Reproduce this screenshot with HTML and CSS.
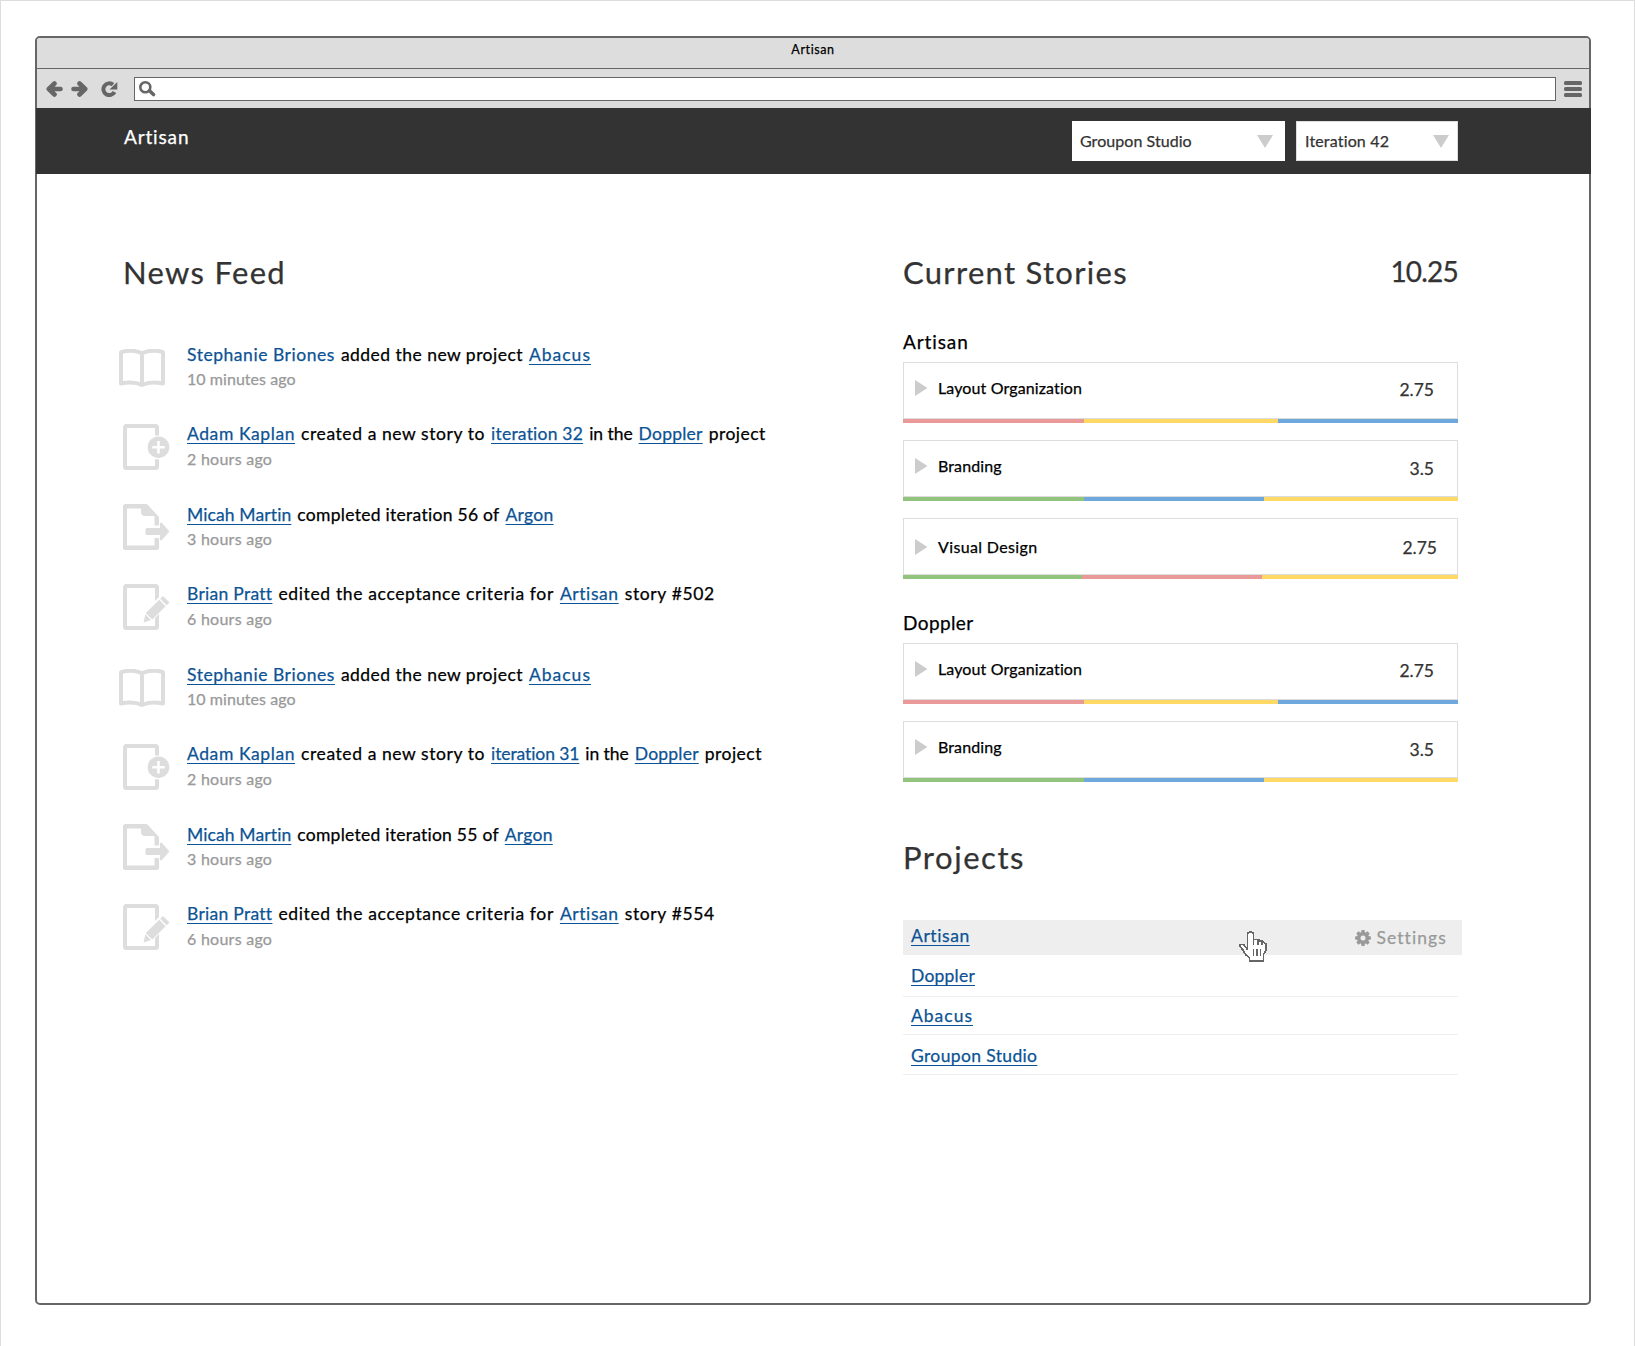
FILE: index.html
```html
<!DOCTYPE html>
<html lang="en">
<head>
<meta charset="utf-8">
<title>Artisan</title>
<link rel="stylesheet" href="styles.css">
</head>
<body>
<svg class="sprite" width="0" height="0" aria-hidden="true">
  <symbol id="book" viewBox="0 0 46 39"><path d="M2 3.2C9 1 17 1.400 23 4.300C29 1.400 37 1 44 3.200V34.500C37 33 29 33 23 36C17 33 9 33 2 34.500ZM23 4.300V36" fill="none" stroke="#ddd" stroke-width="4" stroke-linejoin="round"/></symbol>
  <symbol id="doc-add" viewBox="0 0 47 46"><path d="M36 11.400V3.500Q36 0 32.500 0H3.500Q0 0 0 3.500V42.500Q0 46 3.500 46H32.500Q36 46 36 42.500V35.300H32V42H4V4H32V11.400Z" fill="#ddd"/><circle cx="35.500" cy="23.200" r="10.800" fill="#ddd"/><path d="M35.500 17V29.400M29.300 23.200H41.700" stroke="#fff" stroke-width="2.600"/></symbol>
  <symbol id="doc-move" viewBox="0 0 47 46"><path d="M36 21.500V13L24 0H2.500Q0 0 0 2.500V43.500Q0 46 2.500 46H33.500Q36 46 36 43.500V34H31.500V41.500H4V4.500H18V8Q18 12 22 12H31.500V21.500Z" fill="#ddd"/><path d="M24 24H37V19L38.500 18.500L46.500 27.500L38.500 36.500L37 36V31H24Q22.500 31 22.500 29.500V25.500Q22.500 24 24 24Z" fill="#ddd"/></symbol>
  <symbol id="doc-edit" viewBox="0 0 47 46"><path d="M36 13V3.500Q36 0 32.500 0H3.500Q0 0 0 3.500V42.500Q0 46 3.500 46H32.500Q36 46 36 42.500V30L32 34V42H4V4H32V17Z" fill="#ddd"/><path d="M40 12L46.500 18.500L43.700 21.300L37.200 14.800ZM36.200 15.800L42.700 22.300L29.200 35.500L22.800 29ZM22.300 30.200L28 36L20.500 38.500Z" fill="#ddd"/></symbol>
  <symbol id="arrow" viewBox="0 0 17 16"><path d="M14.500 8H5M8.500 2.500L2.800 8L8.500 13.500" fill="none" stroke="#666" stroke-width="4.600" stroke-linecap="round" stroke-linejoin="round"/></symbol>
  <symbol id="play" viewBox="0 0 13 16"><path d="M0 0L12.500 8L0 16Z" fill="#ccc"/></symbol>
  <symbol id="down" viewBox="0 0 16 13"><path d="M0 0H16L8 13Z" fill="#ccc"/></symbol>
</svg>

<div class="window">
  <div class="titlebar">Artisan</div>
  <div class="toolbar">
    <svg class="back" width="17" height="16"><use href="#arrow"/></svg>
    <svg class="forward" width="17" height="16"><use href="#arrow"/></svg>
    <svg class="reload" width="17" height="16" viewBox="0 0 17 16"><path d="M12 3.600A5.900 5.900 0 1 0 13.500 11" fill="none" stroke="#666" stroke-width="4"/><path d="M16.300 1V8.500H8.500Z" fill="#666"/></svg>
    <div class="address"><svg width="17" height="16" viewBox="0 0 17 16"><circle cx="6.300" cy="6.300" r="5" fill="none" stroke="#666" stroke-width="2.600"/><path d="M10.500 9.800L14.500 13.500" stroke="#666" stroke-width="3.600" stroke-linecap="round"/></svg></div>
    <div class="menu"><i></i><i></i><i></i></div>
  </div>
  <header class="nav">
    <div class="brand">Artisan</div>
    <div class="select select-studio"><span>Groupon Studio</span><svg width="16" height="13"><use href="#down"/></svg></div>
    <div class="select select-iteration"><span>Iteration 42</span><svg width="16" height="13"><use href="#down"/></svg></div>
  </header>

  <main class="content">
    <section class="feed">
      <h1>News Feed</h1>
      <article><svg class="icon book" width="46" height="39"><use href="#book"/></svg><div class="entry"><p><a class="plain tr-54">Stephanie Briones</a><span class="tr-47">added the new project</span><a class="tr-100">Abacus</a></p><time class="minutes">10 minutes ago</time></div></article>
      <article><svg class="icon" width="47" height="46"><use href="#doc-add"/></svg><div class="entry"><p><a class="tr-58">Adam Kaplan</a><span class="tr-58">created a new story to</span><a class="tr-22">iteration 32</a><span class="tr-0">in the</span><a class="tr-22">Doppler</a><span class="tr-47">project</span></p><time>2 hours ago</time></div></article>
      <article><svg class="icon" width="47" height="46"><use href="#doc-move"/></svg><div class="entry"><p><a class="tr-10">Micah Martin</a><span class="tr-28">completed iteration 56 of</span><a class="tr-28">Argon</a></p><time>3 hours ago</time></div></article>
      <article><svg class="icon" width="47" height="46"><use href="#doc-edit"/></svg><div class="entry"><p><a class="tr-28">Brian Pratt</a><span class="tr-64">edited the acceptance criteria for</span><a class="tr-58">Artisan</a><span class="tr-64">story #502</span></p><time>6 hours ago</time></div></article>
      <article><svg class="icon book" width="46" height="39"><use href="#book"/></svg><div class="entry"><p><a class="tr-54">Stephanie Briones</a><span class="tr-47">added the new project</span><a class="tr-100">Abacus</a></p><time class="minutes">10 minutes ago</time></div></article>
      <article><svg class="icon" width="47" height="46"><use href="#doc-add"/></svg><div class="entry"><p><a class="tr-58">Adam Kaplan</a><span class="tr-58">created a new story to</span><a class="tr-n10">iteration 31</a><span class="tr-0">in the</span><a class="tr-22">Doppler</a><span class="tr-47">project</span></p><time>2 hours ago</time></div></article>
      <article><svg class="icon" width="47" height="46"><use href="#doc-move"/></svg><div class="entry"><p><a class="tr-10">Micah Martin</a><span class="tr-25">completed iteration 55 of</span><a class="tr-28">Argon</a></p><time>3 hours ago</time></div></article>
      <article><svg class="icon" width="47" height="46"><use href="#doc-edit"/></svg><div class="entry"><p><a class="tr-28">Brian Pratt</a><span class="tr-64">edited the acceptance criteria for</span><a class="tr-58">Artisan</a><span class="tr-64">story #554</span></p><time>6 hours ago</time></div></article>
    </section>

    <section class="side">
      <div class="side-head"><h1>Current Stories</h1><div class="total">10.25</div></div>
      <h2>Artisan</h2>
      <div class="story"><div class="card"><svg width="13" height="16"><use href="#play"/></svg><span class="name tr-10">Layout Organization</span><span class="points">2.75</span></div><div class="strip"><i class="red" style="width:181px"></i><i class="yellow" style="width:194px"></i><i class="blue" style="width:180px"></i></div></div>
      <div class="story"><div class="card"><svg width="13" height="16"><use href="#play"/></svg><span class="name tr-10">Branding</span><span class="points low">3.5</span></div><div class="strip"><i class="green" style="width:181px"></i><i class="blue" style="width:180px"></i><i class="yellow" style="width:194px"></i></div></div>
      <div class="story"><div class="card lowered"><svg width="13" height="16"><use href="#play"/></svg><span class="name tr-36">Visual Design</span><span class="points high">2.75</span></div><div class="strip"><i class="green" style="width:179px"></i><i class="red" style="width:180px"></i><i class="yellow" style="width:196px"></i></div></div>
      <h2 class="second">Doppler</h2>
      <div class="story"><div class="card"><svg width="13" height="16"><use href="#play"/></svg><span class="name tr-10">Layout Organization</span><span class="points">2.75</span></div><div class="strip"><i class="red" style="width:181px"></i><i class="yellow" style="width:194px"></i><i class="blue" style="width:180px"></i></div></div>
      <div class="story"><div class="card"><svg width="13" height="16"><use href="#play"/></svg><span class="name tr-10">Branding</span><span class="points low">3.5</span></div><div class="strip"><i class="green" style="width:181px"></i><i class="blue" style="width:180px"></i><i class="yellow" style="width:194px"></i></div></div>
      <h1 class="projects-title">Projects</h1>
      <ul class="projects">
        <li class="active"><a class="tr-58">Artisan</a><div class="settings"><svg width="16" height="16" viewBox="-8 -8 16 16"><g fill="#999"><path id="tooth" d="M-2 -5L-1.500 -7.900H1.500L2 -5V5L1.500 7.900H-1.500L-2 5Z"/><use href="#tooth" transform="rotate(45)"/><use href="#tooth" transform="rotate(90)"/><use href="#tooth" transform="rotate(135)"/><circle r="6"/></g><circle r="2.500" fill="#eee"/></svg><span>Settings</span></div>
          <svg class="pointer" width="28" height="31" viewBox="0 0 28 31" shape-rendering="crispEdges"><path d="M8.500 18.500V2.500L10.500 .800H12.500L14.500 2.500V8.500H20.500V10H23.500L27 13V19.500L24.500 23V30H10.500V27L6.500 23.500L4 19L.800 15.500V13.500H4.500L8.500 18.500" fill="#fff" stroke="#666" stroke-width="1.600"/><path d="M14.500 8V14M19 9V14M23 10.500V14M14.500 17.500V25M18 17.500V25M21.500 17.500V25" stroke="#666" stroke-width="1.500"/></svg></li>
        <li><a class="tr-22">Doppler</a></li>
        <li class="abacus"><a class="tr-100">Abacus</a></li>
        <li class="studio"><a class="tr-36">Groupon Studio</a></li>
      </ul>
    </section>
  </main>
</div>
</body>
</html>
```
FILE: styles.css
```css
* { box-sizing: border-box; }
body { margin: 0; height: 1346px; padding: 35px 43px 0 34px; border: 1px solid #ddd; border-bottom: 0; background: #fff; color: #000; font-family: Lato, sans-serif; font-size: 17.500px; font-variant-ligatures: none; -webkit-text-stroke: .25px currentColor; }
h1, h2, p, ul { margin: 0; padding: 0; font-weight: 400; }
svg { display: block; flex: none; }
.sprite { position: absolute; }

/* letter tracking, in hundredths of a pixel */
.tr-n10 { letter-spacing: -.1px; }
.tr-0 { letter-spacing: -.04px; }
.tr-10 { letter-spacing: .12px; }
.tr-22 { letter-spacing: .22px; }
.tr-25 { letter-spacing: .25px; }
.tr-28 { letter-spacing: .28px; }
.tr-36 { letter-spacing: .36px; }
.tr-47 { letter-spacing: .47px; }
.tr-54 { letter-spacing: .54px; }
.tr-58 { letter-spacing: .58px; }
.tr-64 { letter-spacing: .64px; }
.tr-100 { letter-spacing: 1px; }

.window { width: 1556px; height: 1269px; border: 2px solid #666; border-radius: 5px; }
.titlebar { height: 31px; border-bottom: 1px solid #666; background: #ddd; border-radius: 3px 3px 0 0; font-size: 12.500px; line-height: 24px; text-align: center; letter-spacing: .6px; }
.toolbar { display: flex; height: 39px; padding: 8px 7px 0 9px; background: #ddd; }
.back, .forward, .reload { margin-top: 4px; }
.forward { margin-left: 8px; transform: scaleX(-1); }
.reload { margin-left: 13px; }
.address { width: 1422px; height: 24px; margin-left: 16px; padding: 3px 4px; border: 1px solid #666; background: #fff; }
.menu { display: grid; gap: 2px; width: 18px; height: 16px; margin: 4px 0 0 8px; }
.menu i { height: 4px; border-radius: 1.500px; background: #666; }
.nav { display: flex; height: 66px; margin: 0 -2px 0 -1px; padding: 13px 133px 0 88px; background: #333; color: #fff; }
.brand { flex: 1; font-size: 19px; line-height: 32px; letter-spacing: .85px; }
.select { display: flex; justify-content: space-between; height: 40px; padding: 0 11px 0 7px; border: 1px solid #fff; background: #fff; color: #333; font-size: 16px; line-height: 38px; letter-spacing: .05px; }
.select svg { margin-top: 13px; }
.select-studio { width: 213px; }
.select-iteration { width: 162px; margin-left: 11px; padding: 0 8px; border-color: #ddd; letter-spacing: .16px; }
.content { display: flex; padding: 78px 0 0 86px; }
h1 { color: #333; font-size: 31px; line-height: 40px; letter-spacing: 1.300px; }
.feed { width: 780px; }
.feed article { display: flex; height: 80px; }
.feed h1 + article { margin-top: 52px; }
.icon { width: 47px; }
.icon.book { width: 46px; margin: 5px 5px 0 -4px; }
.entry { padding-left: 17px; }
.entry p { display: flex; gap: 6px; line-height: 20px; margin: 1px 0 4px; white-space: nowrap; }
article:nth-of-type(even) .entry p { margin: 0 0 5px; }
a { color: #0b5394; text-decoration: underline 1px; text-underline-offset: 3px; text-decoration-skip-ink: none; }
a.plain { text-decoration: none; }
time { display: block; color: #999; font-size: 16px; line-height: 20px; letter-spacing: .26px; }
time.minutes { letter-spacing: .05px; }
.side { width: 559px; }
.side-head { display: flex; justify-content: space-between; width: 555px; }
.total { color: #333; font-size: 28px; line-height: 39px; letter-spacing: -.8px; }
h2 { margin-top: 34px; font-size: 19px; line-height: 32px; height: 36px; letter-spacing: .9px; }
h2.second { margin-top: 28px; letter-spacing: .4px; }
.story { width: 555px; margin-bottom: 17px; }
.card { display: flex; height: 57px; padding: 17px 23px 0 11px; border: 1px solid #ddd; }
.name { flex: 1; margin: -2px 0 0 10px; font-size: 16px; line-height: 20px; }
.points { color: #333; font-size: 17.500px; line-height: 20px; }
.points.low { margin-top: 1px; }
.points.high { margin-top: -1px; }
.lowered { padding: 20px 20px 0 11px; }
.strip { display: flex; height: 4px; }
.red { background: #ea9999; }
.yellow { background: #ffd966; }
.blue { background: #6fa8dc; }
.green { background: #93c47d; }
.projects-title { margin-top: 55px; letter-spacing: 1.550px; }
.projects { margin-top: 43px; list-style: none; }
.projects li { width: 555px; height: 42px; padding: 6px 8px 0; border-bottom: 1px solid #eee; line-height: 30px; }
.projects li.abacus { height: 38px; padding-top: 4px; }
.projects li.studio { height: 40px; padding-top: 6px; }
.projects li.active { display: flex; position: relative; justify-content: space-between; width: 559px; height: 35px; padding: 4px 15px 0 8px; border: 0; background: #eee; line-height: 24px; }
.settings { display: flex; gap: 5px; color: #999; line-height: 28px; letter-spacing: 1.100px; }
.settings svg { margin-top: 6px; }
.pointer { position: absolute; left: 336px; top: 11px; }
```
